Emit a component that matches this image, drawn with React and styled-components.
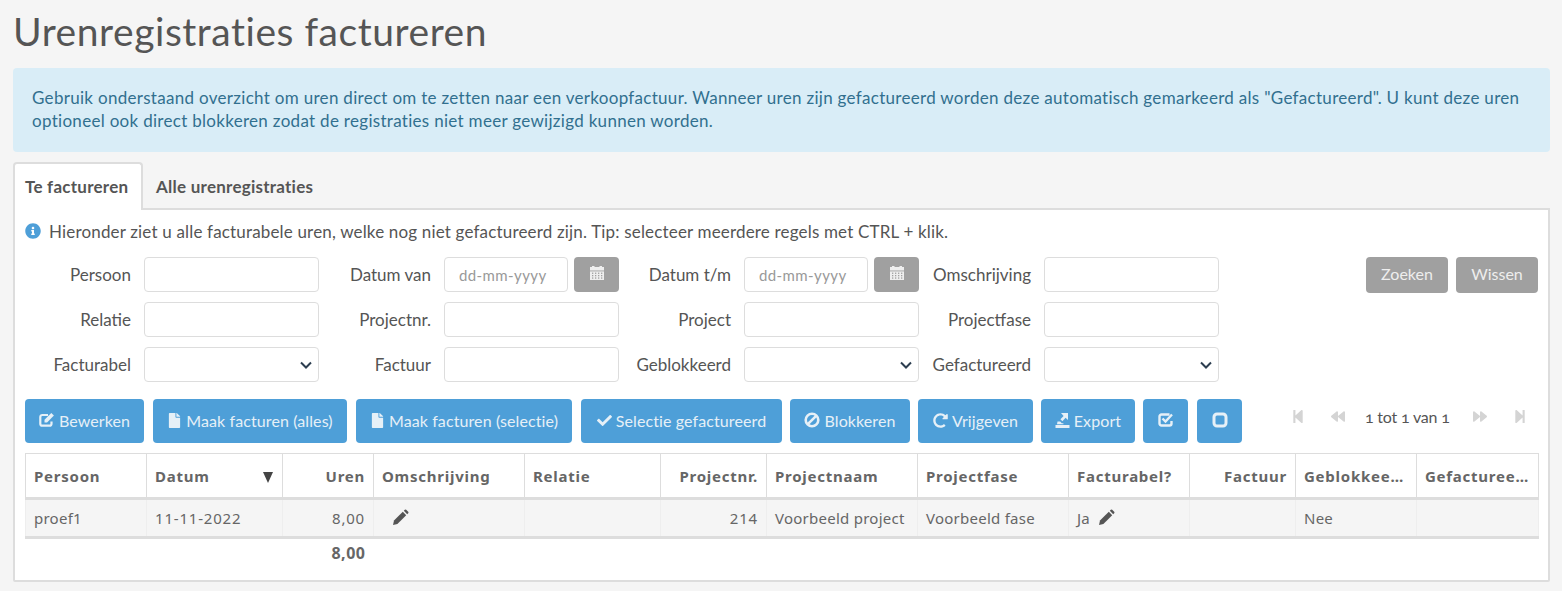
import React from 'react';
import styled, { createGlobalStyle } from 'styled-components';
import {
  FaBackward,
  FaCheck,
  FaFile,
  FaForward,
  FaInfoCircle,
  FaRedoAlt,
  FaStepBackward,
  FaStepForward,
} from 'react-icons/fa';

const GlobalStyle = createGlobalStyle`
  * { box-sizing: border-box; }
  html, body { margin: 0; height: 591px; overflow: hidden; }
  body {
    background: #f5f5f5;
    color: #555;
    font-family: 'Lato', 'Liberation Sans', sans-serif;
    font-size: 17px;
  }
`;

const chevron = encodeURIComponent(
  '<svg xmlns="http://www.w3.org/2000/svg" width="12" height="8" viewBox="0 0 12 8"><path d="M1 1.5l5 5 5-5" fill="none" stroke="#2c3e50" stroke-width="2"/></svg>'
);

const Page = styled.div`
  padding: 0 12px 0 13px;
`;

const Title = styled.h1`
  margin: 0;
  height: 68px;
  padding-top: 9px;
  font-size: 39px;
  line-height: 44px;
  font-weight: 400;
  color: #555;
  letter-spacing: 0.55px;
`;

const Alert = styled.div`
  height: 84px;
  margin-bottom: 10px;
  padding: 18px 19px;
  background: #d9edf7;
  border-radius: 4px;
  color: #31708f;
  font-size: 17px;
  line-height: 23px;
  letter-spacing: 0.3px;
`;

const Tabs = styled.div`
  display: flex;
  height: 48px;
  margin-bottom: -2px;
`;

const Tab = styled.div`
  position: relative;
  z-index: 1;
  display: flex;
  align-items: center;
  padding: 0 ${(p) => (p.$active ? '10px' : '11px')} 2px;
  width: ${(p) => (p.$active ? '130px' : 'auto')};
  font-size: 17px;
  font-weight: 700;
  letter-spacing: 0.25px;
  white-space: nowrap;
  color: #555;
  background: ${(p) => (p.$active ? '#fff' : 'transparent')};
  border: 2px solid ${(p) => (p.$active ? '#ddd' : 'transparent')};
  border-bottom: 0;
  border-radius: 4px 4px 0 0;
`;

const Panel = styled.div`
  height: 374px;
  padding: 11px 10px 0 10px;
  background: #fff;
  border: 2px solid #ddd;
  border-radius: 0 0 2px 2px;
`;

const Hint = styled.div`
  display: flex;
  align-items: center;
  gap: 8px;
  height: 20px;
  letter-spacing: 0.17px;
  white-space: nowrap;

  svg { color: #4e9fd8; font-size: 16px; }
`;

const FilterArea = styled.div`
  display: flex;
  justify-content: space-between;
  margin-top: 16px;
`;

const FilterGrid = styled.div`
  display: grid;
  grid-template-columns: repeat(4, 294px);
  gap: 10px 6px;
`;

const Field = styled.label`
  display: grid;
  grid-template-columns: 106px 175px;
  column-gap: 13px;
  align-items: center;
  height: 35px;
`;

const FieldLabel = styled.span`
  display: flex;
  justify-content: flex-end;
  white-space: nowrap;
`;

const Input = styled.input`
  width: 100%;
  height: 35px;
  padding: 0 14px;
  background: #fff;
  border: 1px solid #ddd;
  border-radius: 4px;
  font-family: 'Lato', 'Liberation Sans', sans-serif;
  font-size: 15px;
  letter-spacing: 0.4px;
  outline: none;

  &::placeholder { color: #999; opacity: 1; }
`;

const Select = styled.select`
  width: 100%;
  height: 35px;
  appearance: none;
  background: #fff url("data:image/svg+xml,${chevron}") no-repeat right 6px center;
  border: 1px solid #ddd;
  border-radius: 4px;
  color: #2c3e50;
`;

const DateGroup = styled.div`
  display: grid;
  grid-template-columns: 124px 45px;
  column-gap: 6px;
`;

const GreyButton = styled.button`
  display: flex;
  align-items: center;
  justify-content: center;
  height: ${(p) => p.$height || 36}px;
  width: ${(p) => p.$width || 82}px;
  padding: 0 0 4px;
  background: #a0a0a0;
  border: 0;
  border-radius: 4px;
  color: #eee;
  font-family: 'Lato', 'Liberation Sans', sans-serif;
  font-size: 16px;
`;

const SearchButtons = styled.div`
  display: flex;
  gap: 8px;
  align-items: flex-start;
`;

const Toolbar = styled.div`
  display: flex;
  align-items: flex-start;
  margin-top: 17px;
  height: 44px;
`;

const ActionButton = styled.button`
  display: flex;
  align-items: center;
  justify-content: center;
  gap: 4px;
  flex: none;
  width: ${(p) => p.$width}px;
  height: 44px;
  margin-right: ${(p) => p.$gap ?? 9}px;
  padding: 0 0 2px;
  background: #4e9fd8;
  border: 0;
  border-radius: 4px;
  color: #e6f0f7;
  font-family: 'Lato', 'Liberation Sans', sans-serif;
  font-size: 16px;
  letter-spacing: 0.1px;
  white-space: nowrap;

  svg { font-size: 15px; }
`;

const Pager = styled.div`
  display: flex;
  align-items: center;
  height: 34px;
  margin-left: 49px;
`;

const PagerIcon = styled.span`
  display: flex;
  justify-content: center;
  width: 14px;
  margin-right: ${(p) => p.$gap}px;
  color: #d4d4d4;
  font-size: 15px;
`;

const PagerText = styled.span`
  width: 114px;
  padding-left: 6px;
  font-size: 16px;
  font-variant-numeric: oldstyle-nums;
  letter-spacing: -0.2px;
  color: #555;
`;

const Table = styled.table`
  width: 1513px;
  margin-top: 10px;
  border-collapse: collapse;
  table-layout: fixed;
  font-family: 'Noto Sans', 'Liberation Sans', sans-serif;
  font-size: 15px;
  color: #666;
`;

const HeadCell = styled.th`
  position: relative;
  height: 45px;
  padding: 0 ${(p) => (p.$tight ? 6 : p.$right ? 8 : 11)}px 0 8px;
  text-align: ${(p) => (p.$right ? 'right' : 'left')};
  font-weight: 700;
  letter-spacing: 0.75px;
  border: 1px solid #ddd;
  border-bottom: 3px solid #ddd;
  overflow: hidden;
  white-space: nowrap;
  text-overflow: ellipsis;
`;

const SortArrow = styled.span`
  position: absolute;
  right: 9px;
  top: 18px;
  width: 0;
  height: 0;
  border-left: 5px solid transparent;
  border-right: 5px solid transparent;
  border-top: 11px solid #444;
`;

const Cell = styled.td`
  height: 39px;
  padding: 0 8px;
  background: #f5f5f5;
  text-align: ${(p) => (p.$right ? 'right' : 'left')};
  letter-spacing: ${(p) => (p.$numeric ? '0.8px' : '0.25px')};
  border-left: 1px solid #eee;
  border-right: 1px solid #eee;
  border-bottom: 3px solid #ddd;
  white-space: nowrap;

  svg { color: #555; vertical-align: -2px; }
`;

const PencilSpacer = styled.span`
  display: inline-block;
  width: ${(p) => p.$width}px;
`;

const TotalCell = styled.td`
  height: 30px;
  padding: 0 8px;
  text-align: right;
  font-weight: 700;
  font-size: 16px;
  letter-spacing: 0.5px;
`;

// glyphicon-export look: arrow leaving a tray
const ExportIcon = () => (
  <svg width="15" height="15" viewBox="0 0 15 15" fill="currentColor">
    <path d="M6 0h7v7l-2.4-2.2-3.2 3.4-2-2 3.2-3.2z" />
    <path d="M2.5 8.5h2.7l1.6 1.7h1.6v1H2z" />
    <rect x="0.5" y="12" width="14" height="3" />
  </svg>
);

const CheckedBox = () => (
  <svg width="16" height="16" viewBox="0 0 16 16" fill="none" stroke="currentColor">
    <path d="M13.5 9v2.5a2 2 0 0 1-2 2h-8a2 2 0 0 1-2-2v-7a2 2 0 0 1 2-2h8" strokeWidth="2.4" />
    <path d="M4.5 6.5l3 3 6.5-7" strokeWidth="2.4" />
  </svg>
);

const EmptyBox = () => (
  <svg width="16" height="16" viewBox="0 0 16 16" fill="none" stroke="currentColor">
    <rect x="2" y="2" width="12" height="12" rx="3" strokeWidth="3" />
  </svg>
);

const EditIcon = () => (
  <svg width="16" height="16" viewBox="0 0 16 16" fill="none" stroke="currentColor">
    <path d="M12.5 9.5v2.2a2 2 0 0 1-2 2H3.3a2 2 0 0 1-2-2V5a2 2 0 0 1 2-2H9" strokeWidth="2.2" />
    <path d="M5.5 7.8L12.3 1l2.6 2.6-6.8 6.8H5.5z" fill="currentColor" stroke="none" />
  </svg>
);

const BanIcon = () => (
  <svg width="16" height="16" viewBox="0 0 16 16" fill="none" stroke="currentColor" strokeWidth="2.6">
    <circle cx="8" cy="8" r="6.3" />
    <path d="M3.8 12.2l8.4-8.4" />
  </svg>
);

const CalendarIcon = () => (
  <svg width="16" height="16" viewBox="0 0 16 16" fill="currentColor">
    <path d="M3 1h2.5v1h5V1H13v1h2v3.6H1V2h2z" />
    <rect x="1" y="6.4" width="14" height="8.6" />
    {[7.6, 10, 12.4].map((y) =>
      [3, 6, 9, 12].map((x) => <rect key={`${x}-${y}`} x={x} y={y} width="1.3" height="1.3" fill="#a0a0a0" />)
    )}
  </svg>
);

const PencilIcon = () => (
  <svg width="17" height="17" viewBox="0 0 17 17" fill="currentColor">
    <path d="M1 16l1-4.4L10.8 2.8l3.4 3.4L5.4 15z" />
    <path d="M11.8 1.8l1-1a1 1 0 0 1 1.4 0l2 2a1 1 0 0 1 0 1.4l-1 1z" />
  </svg>
);

const columns = [
  { title: 'Persoon', width: 121, value: 'proef1' },
  { title: 'Datum', width: 136, value: '11-11-2022', sorted: true, numeric: true },
  { title: 'Uren', width: 91, value: '8,00', right: true, numeric: true },
  { title: 'Omschrijving', width: 151, pencil: 10 },
  { title: 'Relatie', width: 136 },
  { title: 'Projectnr.', width: 106, value: '214', right: true, numeric: true },
  { title: 'Projectnaam', width: 151, value: 'Voorbeeld project' },
  { title: 'Projectfase', width: 151, value: 'Voorbeeld fase' },
  { title: 'Facturabel?', width: 121, value: 'Ja ', pencil: 4 },
  { title: 'Factuur', width: 106, right: true },
  { title: 'Geblokkeerd', width: 121, value: 'Nee' },
  { title: 'Gefactureerd', width: 122, tight: true },
];

const filters = [
  { label: 'Persoon' },
  { label: 'Datum van', date: true },
  { label: 'Datum t/m', date: true },
  { label: 'Omschrijving' },
  { label: 'Relatie' },
  { label: 'Projectnr.' },
  { label: 'Project' },
  { label: 'Projectfase' },
  { label: 'Facturabel', select: true },
  { label: 'Factuur' },
  { label: 'Geblokkeerd', select: true },
  { label: 'Gefactureerd', select: true },
];

const actions = [
  { label: 'Bewerken', icon: <EditIcon />, width: 119 },
  { label: 'Maak facturen (alles)', icon: <FaFile />, width: 194 },
  { label: 'Maak facturen (selectie)', icon: <FaFile />, width: 216 },
  { label: 'Selectie gefactureerd', icon: <FaCheck />, width: 201, gap: 8 },
  { label: 'Blokkeren', icon: <BanIcon />, width: 120, gap: 8 },
  { label: 'Vrijgeven', icon: <FaRedoAlt />, width: 115, gap: 8 },
  { label: 'Export', icon: <ExportIcon />, width: 94, gap: 8 },
  { icon: <CheckedBox />, width: 45 },
  { icon: <EmptyBox />, width: 45, gap: 0 },
];

const FilterField = ({ label, date, select }) => (
  <Field>
    <FieldLabel>{label}</FieldLabel>
    {date && (
      <DateGroup>
        <Input placeholder="dd-mm-yyyy" />
        <GreyButton $width={45} $height={35}><CalendarIcon /></GreyButton>
      </DateGroup>
    )}
    {select && <Select><option /></Select>}
    {!date && !select && <Input />}
  </Field>
);

const App = () => (
  <Page>
    <GlobalStyle />
    <Title>Urenregistraties factureren</Title>
    <Alert>
      Gebruik onderstaand overzicht om uren direct om te zetten naar een verkoopfactuur. Wanneer uren zijn
      gefactureerd worden deze automatisch gemarkeerd als "Gefactureerd". U kunt deze uren optioneel ook direct
      blokkeren zodat de registraties niet meer gewijzigd kunnen worden.
    </Alert>
    <Tabs>
      <Tab $active>Te factureren</Tab>
      <Tab>Alle urenregistraties</Tab>
    </Tabs>
    <Panel>
      <Hint>
        <FaInfoCircle />
        Hieronder ziet u alle facturabele uren, welke nog niet gefactureerd zijn. Tip: selecteer meerdere regels met CTRL + klik.
      </Hint>
      <FilterArea>
        <FilterGrid>
          {filters.map((f) => (
            <FilterField key={f.label} {...f} />
          ))}
        </FilterGrid>
        <SearchButtons>
          <GreyButton>Zoeken</GreyButton>
          <GreyButton>Wissen</GreyButton>
        </SearchButtons>
      </FilterArea>
      <Toolbar>
        {actions.map((a, i) => (
          <ActionButton key={i} $width={a.width} $gap={a.gap}>
            {a.icon}
            {a.label}
          </ActionButton>
        ))}
        <Pager>
          <PagerIcon $gap={26}><FaStepBackward /></PagerIcon>
          <PagerIcon $gap={14}><FaBackward /></PagerIcon>
          <PagerText>1 tot 1 van 1</PagerText>
          <PagerIcon $gap={26}><FaForward /></PagerIcon>
          <PagerIcon $gap={0}><FaStepForward /></PagerIcon>
        </Pager>
      </Toolbar>
      <Table>
        <colgroup>
          {columns.map((c) => (
            <col key={c.title} width={c.width} />
          ))}
        </colgroup>
        <thead>
          <tr>
            {columns.map((c) => (
              <HeadCell key={c.title} $right={c.right} $tight={c.tight}>
                {c.title}
                {c.sorted && <SortArrow />}
              </HeadCell>
            ))}
          </tr>
        </thead>
        <tbody>
          <tr>
            {columns.map((c) => (
              <Cell key={c.title} $right={c.right} $numeric={c.numeric}>
                {c.value}
                {c.pencil !== undefined && (
                  <>
                    <PencilSpacer $width={c.pencil} />
                    <PencilIcon />
                  </>
                )}
              </Cell>
            ))}
          </tr>
        </tbody>
        <tfoot>
          <tr>
            <td colSpan={2} />
            <TotalCell>8,00</TotalCell>
          </tr>
        </tfoot>
      </Table>
    </Panel>
  </Page>
);

export default App;
